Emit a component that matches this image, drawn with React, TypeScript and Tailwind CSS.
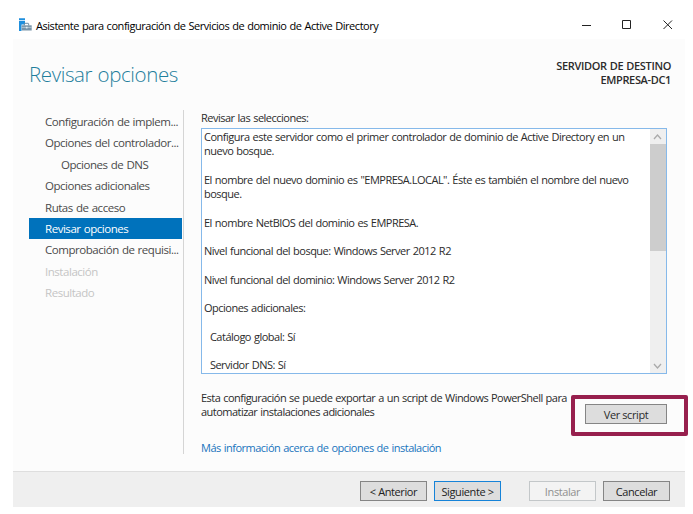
import React from "react";

type Step = { label: string; state?: "active" | "disabled"; nested?: boolean };

const steps: Step[] = [
  { label: "Configuración de implem..." },
  { label: "Opciones del controlador..." },
  { label: "Opciones de DNS", nested: true },
  { label: "Opciones adicionales" },
  { label: "Rutas de acceso" },
  { label: "Revisar opciones", state: "active" },
  { label: "Comprobación de requisi..." },
  { label: "Instalación", state: "disabled" },
  { label: "Resultado", state: "disabled" },
];

const lines: string[] = [
  "Configura este servidor como el primer controlador de dominio de Active Directory en un",
  "nuevo bosque.",
  "",
  "El nombre del nuevo dominio es \"EMPRESA.LOCAL\". Éste es también el nombre del nuevo",
  "bosque.",
  "",
  "El nombre NetBIOS del dominio es EMPRESA.",
  "",
  "Nivel funcional del bosque: Windows Server 2012 R2",
  "",
  "Nivel funcional del dominio: Windows Server 2012 R2",
  "",
  "Opciones adicionales:",
  "",
  "  Catálogo global: Sí",
  "",
  "  Servidor DNS: Sí",
];

function ServerIcon() {
  return (
    <svg className="mt-[18px] h-[14px] w-[14px] shrink-0" viewBox="0 0 14 14">
      <path d="M0 .3h6v2H0zM0 3h6v3.500H2.500V13H0z" fill="#1f8fdd" />
      <path d="M5.300 7.500V5.800q0-.5.5-.5h3.400q.5 0 .5.500v1.700" fill="none" stroke="#6c8ca3" />
      <path d="M2.700 7.300h10v5.200h-10z" fill="#7894a8" />
      <path d="M2.700 9.400h10" stroke="#c9d8e2" strokeWidth=".7" />
      <path d="M6.900 8.800h1.600v1.600H6.900z" fill="#e4edf3" />
    </svg>
  );
}

function Button({ children, className }: { children: React.ReactNode; className: string }) {
  return (
    <button className={`flex h-5 shrink-0 items-center justify-center border text-[11px] leading-none tracking-[-0.4px] whitespace-nowrap ${className}`}>
      {children}
    </button>
  );
}

export default function App() {
  return (
    <div className="h-[514px] w-[693px] overflow-hidden bg-white pl-[13px] font-['Open_Sans','Noto_Sans',sans-serif] text-[11px] tracking-[-0.5px] text-[#2b2b2b] [word-spacing:0.6px]">
      <div className="flex h-[507px] w-[672px] flex-col">
        <header className="flex h-[39px] shrink-0 pl-[6px] text-black">
          <ServerIcon />
          <h1 className="mt-[18px] ml-[3px] text-[11px] leading-[15px] tracking-[-0.460px] whitespace-nowrap">
            Asistente para configuración de Servicios de dominio de Active Directory
          </h1>
          <svg className="mt-[19px] mr-[12px] ml-auto h-[12px] w-[91px]" viewBox="0 0 91 12" fill="none" stroke="#222">
            <path d="M0 6.500h9M40.500 1.500h8v8h-8zM81.500 1.500l8.500 8.500M90 1.500l-8.500 8.500" />
          </svg>
        </header>

        <main className="flex min-h-0 flex-1 flex-col bg-[#fcfcfc]">
          <div className="flex h-[71px] justify-between pr-[14px] pl-4">
            <h2 className="mt-[22px] text-[20.500px] leading-[26px] font-light tracking-[-0.400px] text-[#1f7f9c]">Revisar opciones</h2>
            <div className="mt-5 text-right text-[11px] leading-[14px] font-semibold tracking-[-0.350px]">
              <p>SERVIDOR DE DESTINO</p>
              <p>EMPRESA-DC1</p>
            </div>
          </div>

          <div className="flex">
            <nav className="flex h-[344px] w-[171px] shrink-0 flex-col border-r border-[#d5d5d5] pt-px pr-[1px] pl-4">
              {steps.map((s) => (
                <div
                  key={s.label}
                  className={`flex h-[21.400px] shrink-0 items-center text-[11.500px] tracking-[-0.460px] whitespace-nowrap ${s.nested ? "pl-8" : "pl-4"} ${
                    s.state === "active" ? "bg-[#0072bc] text-white" : s.state === "disabled" ? "text-[#c5c5c5]" : "text-[#4a4a4a]"
                  }`}
                >
                  {s.label}
                </div>
              ))}
            </nav>

            <section className="ml-[17px] w-[466px] shrink-0">
              <p className="h-[18px] leading-[16px]">Revisar las selecciones:</p>
              <div className="flex h-[246px] justify-between border border-[#86b9ea] bg-white">
                <div className="w-0 flex-1 pt-px pl-[2px] leading-[14.250px]">
                  {lines.map((l, i) => (
                    <p key={i} className="h-[14.250px] whitespace-pre">{l}</p>
                  ))}
                </div>
                <div className="flex w-4 shrink-0 flex-col bg-[#efefef]">
                  <svg className="h-[15px] w-4" viewBox="0 0 16 15" fill="none" stroke="#aaa" strokeWidth="1.300">
                    <path d="M4 10l3.500-4 3.500 4" />
                  </svg>
                  <div className="h-[107px] bg-[#cdcdcd]" />
                  <svg className="mt-auto h-[15px] w-4" viewBox="0 0 16 15" fill="none" stroke="#aaa" strokeWidth="1.300">
                    <path d="M4 6l3.500 4L11 6" />
                  </svg>
                </div>
              </div>
              <div className="relative flex h-[66px] justify-between">
                <p className="mt-[17px] w-0 leading-[14.250px] tracking-[-0.530px] whitespace-nowrap">
                  Esta configuración se puede exportar a un script de Windows PowerShell para
                  <br />
                  automatizar instalaciones adicionales
                </p>
                <Button className="mt-[30px] w-[82px] border-[#858585] bg-[#ddd]">Ver script</Button>
                <div className="absolute top-[21px] left-[370px] h-[41px] w-[117px] rounded-[2px] border-4 border-[#97204e]" />
              </div>
              <a className="block leading-[16px] text-[#1874bd]">Más información acerca de opciones de instalación</a>
            </section>
          </div>
        </main>

        <footer className="flex h-[36px] shrink-0 border-t border-[#dedede] bg-[#efefef] pt-[9px] pr-[15px] text-[#222]">
          <Button className="ml-auto w-[67px] border-[#858585] bg-[#ddd]">&lt; Anterior</Button>
          <Button className="ml-[7px] w-[67px] border-[#1683d8] bg-[#ddd]">Siguiente &gt;</Button>
          <Button className="ml-[28px] w-[67px] border-[#c3c7c9] bg-[#f3f3f3] text-[#909090]">Instalar</Button>
          <Button className="ml-[7px] w-[67px] border-[#858585] bg-[#ddd]">Cancelar</Button>
        </footer>
      </div>
    </div>
  );
}
